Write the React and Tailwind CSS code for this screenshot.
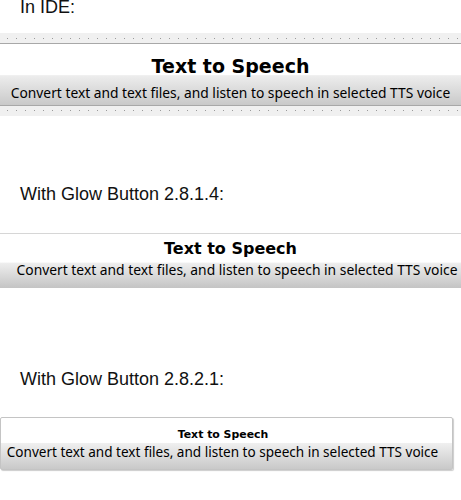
export default function App() {
  const label = "text-[18px] leading-[18px] text-[#111] [font-family:'Liberation_Sans',Arial,sans-serif] pl-5";
  const sub = "[font-family:'Noto_Sans',sans-serif] text-black whitespace-nowrap";
  const title = "[font-family:'DejaVu_Sans',sans-serif] font-bold text-black whitespace-nowrap";
  const dots = "h-px ml-[7px] bg-[linear-gradient(to_right,#9a9a9a_0_1px,transparent_1px)] bg-[length:9px_1px]";
  return (
    <div className="w-[461px] h-[500px] bg-white overflow-hidden flex flex-col">
      <div className={label + " mt-[-2px]"}>In IDE:</div>
      {/* IDE band */}
      <div className="mt-[17px] h-[10px] bg-[#f0f0f0] flex flex-col pt-[5px]">
        <div className={dots}></div>
      </div>
      <div className="h-px bg-[#a8a8a8]"></div>
      <div className="h-[61px] flex flex-col items-center bg-[linear-gradient(to_bottom,#ffffff_0,#ffffff_50%,#ededed_52%,#c9c9c9_100%)]">
        <div className={title + " text-[19px] leading-[22px] mt-[11px]"}>Text to Speech</div>
        <div className={sub + " text-[13.8px] leading-[14px] mt-[9px]"}>Convert text and text files, and listen to speech in selected TTS voice</div>
      </div>
      <div className="h-px bg-[#a8a8a8]"></div>
      <div className="h-[10px] bg-[#f0f0f0] flex flex-col pt-[4px]">
        <div className={dots}></div>
      </div>
      <div className={label + " mt-[69px]"}>With Glow Button 2.8.1.4:</div>
      <div className="mt-[30px] h-px bg-[#d6d6d6]"></div>
      <div className="h-[54px] flex flex-col items-center bg-[linear-gradient(to_bottom,#ffffff_0,#ffffff_52%,#eeeeee_54%,#c4c4c4_100%)]">
        <div className={title + " text-[16px] leading-[18px] mt-[6px]"}>Text to Speech</div>
        <div className={sub + " text-[13.85px] leading-[14px] mt-[5px] ml-[13px]"}>Convert text and text files, and listen to speech in selected TTS voice</div>
      </div>
      <div className={label + " mt-[82px]"}>With Glow Button 2.8.2.1:</div>
      <div className="mt-[29px] w-[453px] h-[53px] rounded-[2px] border border-[#c4c4c4] shadow-[1px_1px_1px_rgba(0,0,0,0.2)] flex flex-col items-center bg-[linear-gradient(to_bottom,#ffffff_0,#ffffff_48%,#efefef_50%,#c9c9c9_100%)]">
        <div className={title + " text-[10.9px] leading-[12px] mt-[11px] mr-[7px]"}>Text to Speech</div>
        <div className={sub + " text-[13.55px] leading-[16px] mt-[3px] mr-[8px]"}>Convert text and text files, and listen to speech in selected TTS voice</div>
      </div>
    </div>
  );
}
